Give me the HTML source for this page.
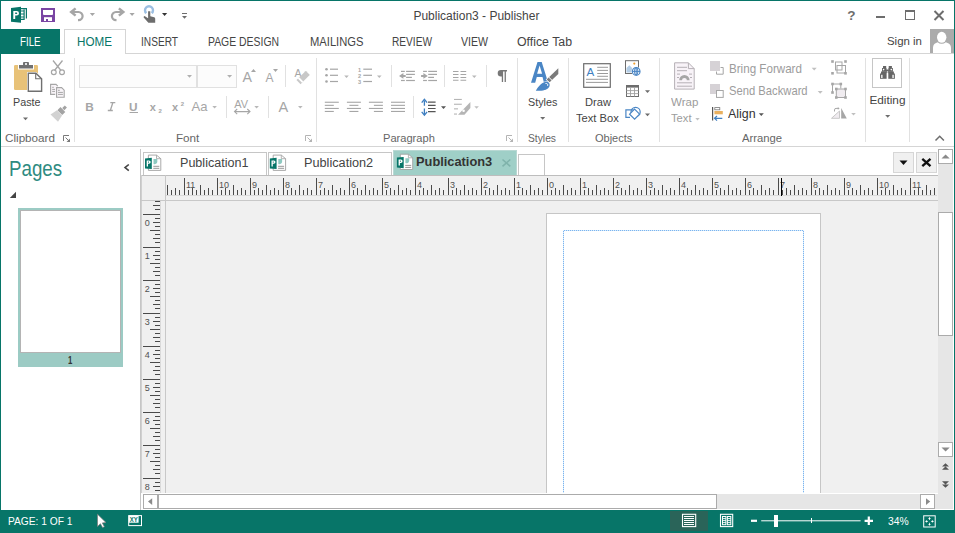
<!DOCTYPE html>
<html><head><meta charset="utf-8"><style>
html,body{margin:0;padding:0;}
body{width:955px;height:533px;position:relative;overflow:hidden;background:#fff;font-family:"Liberation Sans",sans-serif;}
.t{position:absolute;white-space:nowrap;line-height:1;transform-origin:0 0;}
svg{overflow:visible;}
</style></head><body>
<div class="t" style="left:413.40px;top:9.64px;font-size:12.00px;color:#444;">Publication3 - Publisher</div><div style="position:absolute;left:0px;top:29px;width:60px;height:25px;background:#077568;"></div><div class="t" style="left:20.40px;top:35.64px;font-size:12.00px;color:#fff;transform:scaleX(0.8136);">FILE</div><div style="position:absolute;left:64px;top:29px;width:62px;height:25px;border:1px solid #d5d5d5;border-bottom:none;box-sizing:border-box;background:#fff;"></div><div style="position:absolute;left:126px;top:53px;width:828px;height:1px;background:#d5d5d5;"></div><div style="position:absolute;left:60px;top:53px;width:5px;height:1px;background:#d5d5d5;"></div><div class="t" style="left:77.00px;top:35.74px;font-size:12.00px;color:#077568;transform:scaleX(0.9722);">HOME</div><div class="t" style="left:141.00px;top:35.74px;font-size:12.00px;color:#444;transform:scaleX(0.8447);">INSERT</div><div class="t" style="left:208.00px;top:35.74px;font-size:12.00px;color:#444;transform:scaleX(0.8682);">PAGE DESIGN</div><div class="t" style="left:309.50px;top:35.74px;font-size:12.00px;color:#444;transform:scaleX(0.9327);">MAILINGS</div><div class="t" style="left:392.00px;top:35.74px;font-size:12.00px;color:#444;transform:scaleX(0.8450);">REVIEW</div><div class="t" style="left:461.00px;top:35.74px;font-size:12.00px;color:#444;transform:scaleX(0.8806);">VIEW</div><div class="t" style="left:517.00px;top:35.74px;font-size:12.00px;color:#444;transform:scaleX(1.0265);">Office Tab</div><div class="t" style="left:887.00px;top:34.88px;font-size:11.60px;color:#444;transform:scaleX(0.9860);">Sign in</div><div style="position:absolute;left:930px;top:29px;width:24px;height:24px;background:#ababab;"></div><div style="position:absolute;left:1px;top:146px;width:953px;height:1px;background:#d5d5d5;"></div><div style="position:absolute;left:74px;top:58px;width:1px;height:84px;background:#e1e1e1;"></div><div style="position:absolute;left:316px;top:58px;width:1px;height:84px;background:#e1e1e1;"></div><div style="position:absolute;left:517px;top:58px;width:1px;height:84px;background:#e1e1e1;"></div><div style="position:absolute;left:568px;top:58px;width:1px;height:84px;background:#e1e1e1;"></div><div style="position:absolute;left:659px;top:58px;width:1px;height:84px;background:#e1e1e1;"></div><div style="position:absolute;left:865px;top:58px;width:1px;height:84px;background:#e1e1e1;"></div><div style="position:absolute;left:909px;top:58px;width:1px;height:84px;background:#e1e1e1;"></div><div class="t" style="left:4.60px;top:132.89px;font-size:11.00px;color:#666;transform:scaleX(1.0620);">Clipboard</div><div class="t" style="left:175.50px;top:133.19px;font-size:11.00px;color:#666;transform:scaleX(1.0591);">Font</div><div class="t" style="left:382.60px;top:133.09px;font-size:11.00px;color:#666;transform:scaleX(1.0084);">Paragraph</div><div class="t" style="left:528.40px;top:132.89px;font-size:11.00px;color:#666;transform:scaleX(0.9341);">Styles</div><div class="t" style="left:595.00px;top:132.89px;font-size:11.00px;color:#666;">Objects</div><div class="t" style="left:742.30px;top:132.89px;font-size:11.00px;color:#666;transform:scaleX(1.0240);">Arrange</div><div class="t" style="left:12.50px;top:97.31px;font-size:11.80px;color:#444;transform:scaleX(0.9121);">Paste</div><div class="t" style="left:528.40px;top:97.21px;font-size:11.80px;color:#444;transform:scaleX(0.9143);">Styles</div><div class="t" style="left:584.60px;top:97.21px;font-size:11.80px;color:#444;transform:scaleX(0.9436);">Draw</div><div class="t" style="left:576.20px;top:113.21px;font-size:11.80px;color:#444;transform:scaleX(0.9458);">Text Box</div><div class="t" style="left:671.40px;top:97.21px;font-size:11.80px;color:#9c9c9c;transform:scaleX(0.9762);">Wrap</div><div class="t" style="left:671.00px;top:113.21px;font-size:11.80px;color:#9c9c9c;transform:scaleX(0.9468);">Text</div><div class="t" style="left:869.40px;top:94.91px;font-size:11.80px;color:#444;">Editing</div><div class="t" style="left:728.60px;top:62.67px;font-size:12.20px;color:#9c9c9c;transform:scaleX(0.9528);">Bring Forward</div><div class="t" style="left:728.60px;top:85.47px;font-size:12.20px;color:#9c9c9c;transform:scaleX(0.9209);">Send Backward</div><div class="t" style="left:728.00px;top:108.24px;font-size:12.00px;color:#333;transform:scaleX(1.0337);">Align</div><div style="position:absolute;left:79px;top:65px;width:118px;height:23px;border:1px solid #e1e1e1;box-sizing:border-box;background:#fcfcfc;"></div><div style="position:absolute;left:197px;top:65px;width:40px;height:23px;border:1px solid #e1e1e1;box-sizing:border-box;background:#fcfcfc;"></div><div style="position:absolute;left:140px;top:149px;width:1px;height:361px;background:#c6c6c6;"></div><div class="t" style="left:9.30px;top:158.34px;font-size:21.80px;color:#2f8b81;transform:scaleX(0.8592);">Pages</div><div style="position:absolute;left:18px;top:208px;width:105px;height:159px;background:#9ccbc4;"></div><div style="position:absolute;left:20px;top:210px;width:101px;height:143px;background:#fff;border:1px solid #b4b4b4;box-sizing:border-box;"></div><div class="t" style="left:67.70px;top:353.98px;font-size:11.60px;color:#333;font-weight:bold;transform:scaleX(0.6679);">1</div><div style="position:absolute;left:143px;top:152px;width:124px;height:24px;border:1px solid #c6c6c6;border-bottom:none;box-sizing:border-box;background:#fff;"></div><div style="position:absolute;left:268px;top:152px;width:124px;height:24px;border:1px solid #c6c6c6;border-bottom:none;box-sizing:border-box;background:#fff;"></div><div style="position:absolute;left:393px;top:150px;width:124px;height:26px;border:1px solid #b8d8d3;border-bottom:none;box-sizing:border-box;background:#9fcfc7;"></div><div style="position:absolute;left:518px;top:154px;width:27px;height:22px;border:1px solid #c6c6c6;border-bottom:none;box-sizing:border-box;background:#fff;"></div><div class="t" style="left:179.60px;top:157.22px;font-size:12.50px;color:#444;transform:scaleX(1.0055);">Publication1</div><div class="t" style="left:304.40px;top:157.02px;font-size:12.50px;color:#444;transform:scaleX(1.0158);">Publication2</div><div class="t" style="left:416.30px;top:156.42px;font-size:12.50px;color:#333;font-weight:bold;transform:scaleX(1.0254);">Publication3</div><div style="position:absolute;left:893px;top:152px;width:21px;height:21px;border:1px solid #d6d6d6;box-sizing:border-box;background:#f0f0f0;"></div><div style="position:absolute;left:916px;top:152px;width:21px;height:21px;border:1px solid #d6d6d6;box-sizing:border-box;background:#f0f0f0;"></div><div style="position:absolute;left:141px;top:175px;width:797px;height:319px;background:#f0f0f0;"></div><div style="position:absolute;left:141px;top:175px;width:797px;height:1px;background:#bdbdbd;"></div><div style="position:absolute;left:141px;top:175px;width:1px;height:319px;background:#d0d0d0;"></div><div style="position:absolute;left:165px;top:175px;width:1px;height:319px;background:#c8c8c8;"></div><div style="position:absolute;left:141px;top:200px;width:797px;height:1px;background:#c8c8c8;"></div><div style="position:absolute;left:166px;top:195px;width:771px;height:1px;background:#dadada;"></div><div style="position:absolute;left:160px;top:201px;width:1px;height:292px;background:#dadada;"></div><div style="position:absolute;left:546px;top:213px;width:275px;height:290px;background:#fff;border:1px solid #c6c6c6;box-sizing:border-box;"></div><svg style="position:absolute;left:0;top:0" width="955" height="533"><path d="M563.5,494 V230.5 H803.5 V494" fill="none" stroke="#d2eefa" stroke-width="1"/><path d="M563.5,494 V230.5 H803.5 V494" fill="none" stroke="#7fb0f0" stroke-width="1" stroke-dasharray="1 1"/></svg><div style="position:absolute;left:141px;top:493px;width:797px;height:17px;background:#fff;"></div><div style="position:absolute;left:143px;top:494px;width:795px;height:15px;background:#e6e6e6;"></div><div style="position:absolute;left:143px;top:494px;width:15px;height:15px;background:#fff;border:1px solid #ababab;box-sizing:border-box;"></div><div style="position:absolute;left:158px;top:494px;width:559px;height:15px;background:#fff;border:1px solid #ababab;box-sizing:border-box;"></div><div style="position:absolute;left:920px;top:494px;width:15px;height:15px;background:#fff;border:1px solid #ababab;box-sizing:border-box;"></div><div style="position:absolute;left:938px;top:149px;width:15px;height:360px;background:#e6e6e6;"></div><div style="position:absolute;left:938px;top:149px;width:15px;height:15px;background:#fff;border:1px solid #ababab;box-sizing:border-box;"></div><div style="position:absolute;left:938px;top:212px;width:15px;height:124px;background:#fff;border:1px solid #ababab;box-sizing:border-box;"></div><div style="position:absolute;left:938px;top:442px;width:15px;height:15px;background:#fff;border:1px solid #ababab;box-sizing:border-box;"></div><div style="position:absolute;left:0px;top:510px;width:955px;height:23px;background:#077568;"></div><div class="t" style="left:8.40px;top:515.79px;font-size:11.00px;color:#fff;transform:scaleX(0.9285);">PAGE: 1 OF 1</div><div style="position:absolute;left:670px;top:511px;width:38px;height:20px;background:#2a6459;"></div><div class="t" style="left:887.80px;top:515.79px;font-size:11.00px;color:#fff;transform:scaleX(0.9409);">34%</div><div style="position:absolute;left:0px;top:0px;width:955px;height:1px;background:#077568;"></div><div style="position:absolute;left:0px;top:0px;width:1px;height:533px;background:#077568;"></div><div style="position:absolute;left:954px;top:0px;width:1px;height:533px;background:#077568;"></div><svg style="position:absolute;left:0;top:0" width="955" height="533" viewBox="0 0 955 533" font-family="Liberation Sans"><rect x="167" y="185" width="1" height="10" fill="#4a4a4a"/><rect x="171" y="190" width="1" height="5" fill="#4a4a4a"/><rect x="175" y="188" width="1" height="7" fill="#4a4a4a"/><rect x="179" y="190" width="1" height="5" fill="#4a4a4a"/><rect x="184" y="178" width="1" height="17" fill="#4a4a4a"/><rect x="188" y="190" width="1" height="5" fill="#4a4a4a"/><rect x="192" y="188" width="1" height="7" fill="#4a4a4a"/><rect x="196" y="190" width="1" height="5" fill="#4a4a4a"/><rect x="200" y="185" width="1" height="10" fill="#4a4a4a"/><rect x="204" y="190" width="1" height="5" fill="#4a4a4a"/><rect x="208" y="188" width="1" height="7" fill="#4a4a4a"/><rect x="212" y="190" width="1" height="5" fill="#4a4a4a"/><rect x="217" y="178" width="1" height="17" fill="#4a4a4a"/><rect x="221" y="190" width="1" height="5" fill="#4a4a4a"/><rect x="225" y="188" width="1" height="7" fill="#4a4a4a"/><rect x="229" y="190" width="1" height="5" fill="#4a4a4a"/><rect x="233" y="185" width="1" height="10" fill="#4a4a4a"/><rect x="237" y="190" width="1" height="5" fill="#4a4a4a"/><rect x="241" y="188" width="1" height="7" fill="#4a4a4a"/><rect x="245" y="190" width="1" height="5" fill="#4a4a4a"/><rect x="250" y="178" width="1" height="17" fill="#4a4a4a"/><rect x="254" y="190" width="1" height="5" fill="#4a4a4a"/><rect x="258" y="188" width="1" height="7" fill="#4a4a4a"/><rect x="262" y="190" width="1" height="5" fill="#4a4a4a"/><rect x="266" y="185" width="1" height="10" fill="#4a4a4a"/><rect x="270" y="190" width="1" height="5" fill="#4a4a4a"/><rect x="274" y="188" width="1" height="7" fill="#4a4a4a"/><rect x="278" y="190" width="1" height="5" fill="#4a4a4a"/><rect x="283" y="178" width="1" height="17" fill="#4a4a4a"/><rect x="287" y="190" width="1" height="5" fill="#4a4a4a"/><rect x="291" y="188" width="1" height="7" fill="#4a4a4a"/><rect x="295" y="190" width="1" height="5" fill="#4a4a4a"/><rect x="299" y="185" width="1" height="10" fill="#4a4a4a"/><rect x="303" y="190" width="1" height="5" fill="#4a4a4a"/><rect x="307" y="188" width="1" height="7" fill="#4a4a4a"/><rect x="311" y="190" width="1" height="5" fill="#4a4a4a"/><rect x="316" y="178" width="1" height="17" fill="#4a4a4a"/><rect x="320" y="190" width="1" height="5" fill="#4a4a4a"/><rect x="324" y="188" width="1" height="7" fill="#4a4a4a"/><rect x="328" y="190" width="1" height="5" fill="#4a4a4a"/><rect x="332" y="185" width="1" height="10" fill="#4a4a4a"/><rect x="336" y="190" width="1" height="5" fill="#4a4a4a"/><rect x="340" y="188" width="1" height="7" fill="#4a4a4a"/><rect x="344" y="190" width="1" height="5" fill="#4a4a4a"/><rect x="349" y="178" width="1" height="17" fill="#4a4a4a"/><rect x="353" y="190" width="1" height="5" fill="#4a4a4a"/><rect x="357" y="188" width="1" height="7" fill="#4a4a4a"/><rect x="361" y="190" width="1" height="5" fill="#4a4a4a"/><rect x="365" y="185" width="1" height="10" fill="#4a4a4a"/><rect x="369" y="190" width="1" height="5" fill="#4a4a4a"/><rect x="373" y="188" width="1" height="7" fill="#4a4a4a"/><rect x="377" y="190" width="1" height="5" fill="#4a4a4a"/><rect x="382" y="178" width="1" height="17" fill="#4a4a4a"/><rect x="386" y="190" width="1" height="5" fill="#4a4a4a"/><rect x="390" y="188" width="1" height="7" fill="#4a4a4a"/><rect x="394" y="190" width="1" height="5" fill="#4a4a4a"/><rect x="398" y="185" width="1" height="10" fill="#4a4a4a"/><rect x="402" y="190" width="1" height="5" fill="#4a4a4a"/><rect x="406" y="188" width="1" height="7" fill="#4a4a4a"/><rect x="410" y="190" width="1" height="5" fill="#4a4a4a"/><rect x="415" y="178" width="1" height="17" fill="#4a4a4a"/><rect x="419" y="190" width="1" height="5" fill="#4a4a4a"/><rect x="423" y="188" width="1" height="7" fill="#4a4a4a"/><rect x="427" y="190" width="1" height="5" fill="#4a4a4a"/><rect x="431" y="185" width="1" height="10" fill="#4a4a4a"/><rect x="435" y="190" width="1" height="5" fill="#4a4a4a"/><rect x="439" y="188" width="1" height="7" fill="#4a4a4a"/><rect x="443" y="190" width="1" height="5" fill="#4a4a4a"/><rect x="448" y="178" width="1" height="17" fill="#4a4a4a"/><rect x="452" y="190" width="1" height="5" fill="#4a4a4a"/><rect x="456" y="188" width="1" height="7" fill="#4a4a4a"/><rect x="460" y="190" width="1" height="5" fill="#4a4a4a"/><rect x="464" y="185" width="1" height="10" fill="#4a4a4a"/><rect x="468" y="190" width="1" height="5" fill="#4a4a4a"/><rect x="472" y="188" width="1" height="7" fill="#4a4a4a"/><rect x="476" y="190" width="1" height="5" fill="#4a4a4a"/><rect x="481" y="178" width="1" height="17" fill="#4a4a4a"/><rect x="485" y="190" width="1" height="5" fill="#4a4a4a"/><rect x="489" y="188" width="1" height="7" fill="#4a4a4a"/><rect x="493" y="190" width="1" height="5" fill="#4a4a4a"/><rect x="497" y="185" width="1" height="10" fill="#4a4a4a"/><rect x="501" y="190" width="1" height="5" fill="#4a4a4a"/><rect x="505" y="188" width="1" height="7" fill="#4a4a4a"/><rect x="509" y="190" width="1" height="5" fill="#4a4a4a"/><rect x="514" y="178" width="1" height="17" fill="#4a4a4a"/><rect x="518" y="190" width="1" height="5" fill="#4a4a4a"/><rect x="522" y="188" width="1" height="7" fill="#4a4a4a"/><rect x="526" y="190" width="1" height="5" fill="#4a4a4a"/><rect x="530" y="185" width="1" height="10" fill="#4a4a4a"/><rect x="534" y="190" width="1" height="5" fill="#4a4a4a"/><rect x="538" y="188" width="1" height="7" fill="#4a4a4a"/><rect x="542" y="190" width="1" height="5" fill="#4a4a4a"/><rect x="547" y="178" width="1" height="17" fill="#4a4a4a"/><rect x="551" y="190" width="1" height="5" fill="#4a4a4a"/><rect x="555" y="188" width="1" height="7" fill="#4a4a4a"/><rect x="559" y="190" width="1" height="5" fill="#4a4a4a"/><rect x="563" y="185" width="1" height="10" fill="#4a4a4a"/><rect x="567" y="190" width="1" height="5" fill="#4a4a4a"/><rect x="571" y="188" width="1" height="7" fill="#4a4a4a"/><rect x="575" y="190" width="1" height="5" fill="#4a4a4a"/><rect x="580" y="178" width="1" height="17" fill="#4a4a4a"/><rect x="584" y="190" width="1" height="5" fill="#4a4a4a"/><rect x="588" y="188" width="1" height="7" fill="#4a4a4a"/><rect x="592" y="190" width="1" height="5" fill="#4a4a4a"/><rect x="596" y="185" width="1" height="10" fill="#4a4a4a"/><rect x="600" y="190" width="1" height="5" fill="#4a4a4a"/><rect x="604" y="188" width="1" height="7" fill="#4a4a4a"/><rect x="608" y="190" width="1" height="5" fill="#4a4a4a"/><rect x="613" y="178" width="1" height="17" fill="#4a4a4a"/><rect x="617" y="190" width="1" height="5" fill="#4a4a4a"/><rect x="621" y="188" width="1" height="7" fill="#4a4a4a"/><rect x="625" y="190" width="1" height="5" fill="#4a4a4a"/><rect x="629" y="185" width="1" height="10" fill="#4a4a4a"/><rect x="633" y="190" width="1" height="5" fill="#4a4a4a"/><rect x="637" y="188" width="1" height="7" fill="#4a4a4a"/><rect x="641" y="190" width="1" height="5" fill="#4a4a4a"/><rect x="646" y="178" width="1" height="17" fill="#4a4a4a"/><rect x="650" y="190" width="1" height="5" fill="#4a4a4a"/><rect x="654" y="188" width="1" height="7" fill="#4a4a4a"/><rect x="658" y="190" width="1" height="5" fill="#4a4a4a"/><rect x="662" y="185" width="1" height="10" fill="#4a4a4a"/><rect x="666" y="190" width="1" height="5" fill="#4a4a4a"/><rect x="670" y="188" width="1" height="7" fill="#4a4a4a"/><rect x="674" y="190" width="1" height="5" fill="#4a4a4a"/><rect x="679" y="178" width="1" height="17" fill="#4a4a4a"/><rect x="683" y="190" width="1" height="5" fill="#4a4a4a"/><rect x="687" y="188" width="1" height="7" fill="#4a4a4a"/><rect x="691" y="190" width="1" height="5" fill="#4a4a4a"/><rect x="695" y="185" width="1" height="10" fill="#4a4a4a"/><rect x="699" y="190" width="1" height="5" fill="#4a4a4a"/><rect x="703" y="188" width="1" height="7" fill="#4a4a4a"/><rect x="707" y="190" width="1" height="5" fill="#4a4a4a"/><rect x="712" y="178" width="1" height="17" fill="#4a4a4a"/><rect x="716" y="190" width="1" height="5" fill="#4a4a4a"/><rect x="720" y="188" width="1" height="7" fill="#4a4a4a"/><rect x="724" y="190" width="1" height="5" fill="#4a4a4a"/><rect x="728" y="185" width="1" height="10" fill="#4a4a4a"/><rect x="732" y="190" width="1" height="5" fill="#4a4a4a"/><rect x="736" y="188" width="1" height="7" fill="#4a4a4a"/><rect x="740" y="190" width="1" height="5" fill="#4a4a4a"/><rect x="745" y="178" width="1" height="17" fill="#4a4a4a"/><rect x="749" y="190" width="1" height="5" fill="#4a4a4a"/><rect x="753" y="188" width="1" height="7" fill="#4a4a4a"/><rect x="757" y="190" width="1" height="5" fill="#4a4a4a"/><rect x="761" y="185" width="1" height="10" fill="#4a4a4a"/><rect x="765" y="190" width="1" height="5" fill="#4a4a4a"/><rect x="769" y="188" width="1" height="7" fill="#4a4a4a"/><rect x="773" y="190" width="1" height="5" fill="#4a4a4a"/><rect x="778" y="178" width="1" height="17" fill="#4a4a4a"/><rect x="782" y="190" width="1" height="5" fill="#4a4a4a"/><rect x="786" y="188" width="1" height="7" fill="#4a4a4a"/><rect x="790" y="190" width="1" height="5" fill="#4a4a4a"/><rect x="794" y="185" width="1" height="10" fill="#4a4a4a"/><rect x="798" y="190" width="1" height="5" fill="#4a4a4a"/><rect x="802" y="188" width="1" height="7" fill="#4a4a4a"/><rect x="806" y="190" width="1" height="5" fill="#4a4a4a"/><rect x="811" y="178" width="1" height="17" fill="#4a4a4a"/><rect x="815" y="190" width="1" height="5" fill="#4a4a4a"/><rect x="819" y="188" width="1" height="7" fill="#4a4a4a"/><rect x="823" y="190" width="1" height="5" fill="#4a4a4a"/><rect x="827" y="185" width="1" height="10" fill="#4a4a4a"/><rect x="831" y="190" width="1" height="5" fill="#4a4a4a"/><rect x="835" y="188" width="1" height="7" fill="#4a4a4a"/><rect x="839" y="190" width="1" height="5" fill="#4a4a4a"/><rect x="844" y="178" width="1" height="17" fill="#4a4a4a"/><rect x="848" y="190" width="1" height="5" fill="#4a4a4a"/><rect x="852" y="188" width="1" height="7" fill="#4a4a4a"/><rect x="856" y="190" width="1" height="5" fill="#4a4a4a"/><rect x="860" y="185" width="1" height="10" fill="#4a4a4a"/><rect x="864" y="190" width="1" height="5" fill="#4a4a4a"/><rect x="868" y="188" width="1" height="7" fill="#4a4a4a"/><rect x="872" y="190" width="1" height="5" fill="#4a4a4a"/><rect x="877" y="178" width="1" height="17" fill="#4a4a4a"/><rect x="881" y="190" width="1" height="5" fill="#4a4a4a"/><rect x="885" y="188" width="1" height="7" fill="#4a4a4a"/><rect x="889" y="190" width="1" height="5" fill="#4a4a4a"/><rect x="893" y="185" width="1" height="10" fill="#4a4a4a"/><rect x="897" y="190" width="1" height="5" fill="#4a4a4a"/><rect x="901" y="188" width="1" height="7" fill="#4a4a4a"/><rect x="905" y="190" width="1" height="5" fill="#4a4a4a"/><rect x="910" y="178" width="1" height="17" fill="#4a4a4a"/><rect x="914" y="190" width="1" height="5" fill="#4a4a4a"/><rect x="918" y="188" width="1" height="7" fill="#4a4a4a"/><rect x="922" y="190" width="1" height="5" fill="#4a4a4a"/><rect x="926" y="185" width="1" height="10" fill="#4a4a4a"/><rect x="930" y="190" width="1" height="5" fill="#4a4a4a"/><rect x="934" y="188" width="1" height="7" fill="#4a4a4a"/><rect x="155" y="201" width="5" height="1" fill="#4a4a4a"/><rect x="153" y="205" width="7" height="1" fill="#4a4a4a"/><rect x="155" y="209" width="5" height="1" fill="#4a4a4a"/><rect x="143" y="214" width="17" height="1" fill="#4a4a4a"/><rect x="155" y="218" width="5" height="1" fill="#4a4a4a"/><rect x="153" y="222" width="7" height="1" fill="#4a4a4a"/><rect x="155" y="226" width="5" height="1" fill="#4a4a4a"/><rect x="150" y="230" width="10" height="1" fill="#4a4a4a"/><rect x="155" y="234" width="5" height="1" fill="#4a4a4a"/><rect x="153" y="238" width="7" height="1" fill="#4a4a4a"/><rect x="155" y="242" width="5" height="1" fill="#4a4a4a"/><rect x="143" y="247" width="17" height="1" fill="#4a4a4a"/><rect x="155" y="251" width="5" height="1" fill="#4a4a4a"/><rect x="153" y="255" width="7" height="1" fill="#4a4a4a"/><rect x="155" y="259" width="5" height="1" fill="#4a4a4a"/><rect x="150" y="263" width="10" height="1" fill="#4a4a4a"/><rect x="155" y="267" width="5" height="1" fill="#4a4a4a"/><rect x="153" y="271" width="7" height="1" fill="#4a4a4a"/><rect x="155" y="275" width="5" height="1" fill="#4a4a4a"/><rect x="143" y="280" width="17" height="1" fill="#4a4a4a"/><rect x="155" y="284" width="5" height="1" fill="#4a4a4a"/><rect x="153" y="288" width="7" height="1" fill="#4a4a4a"/><rect x="155" y="292" width="5" height="1" fill="#4a4a4a"/><rect x="150" y="296" width="10" height="1" fill="#4a4a4a"/><rect x="155" y="300" width="5" height="1" fill="#4a4a4a"/><rect x="153" y="304" width="7" height="1" fill="#4a4a4a"/><rect x="155" y="308" width="5" height="1" fill="#4a4a4a"/><rect x="143" y="313" width="17" height="1" fill="#4a4a4a"/><rect x="155" y="317" width="5" height="1" fill="#4a4a4a"/><rect x="153" y="321" width="7" height="1" fill="#4a4a4a"/><rect x="155" y="325" width="5" height="1" fill="#4a4a4a"/><rect x="150" y="329" width="10" height="1" fill="#4a4a4a"/><rect x="155" y="333" width="5" height="1" fill="#4a4a4a"/><rect x="153" y="337" width="7" height="1" fill="#4a4a4a"/><rect x="155" y="341" width="5" height="1" fill="#4a4a4a"/><rect x="143" y="346" width="17" height="1" fill="#4a4a4a"/><rect x="155" y="350" width="5" height="1" fill="#4a4a4a"/><rect x="153" y="354" width="7" height="1" fill="#4a4a4a"/><rect x="155" y="358" width="5" height="1" fill="#4a4a4a"/><rect x="150" y="362" width="10" height="1" fill="#4a4a4a"/><rect x="155" y="366" width="5" height="1" fill="#4a4a4a"/><rect x="153" y="370" width="7" height="1" fill="#4a4a4a"/><rect x="155" y="374" width="5" height="1" fill="#4a4a4a"/><rect x="143" y="379" width="17" height="1" fill="#4a4a4a"/><rect x="155" y="383" width="5" height="1" fill="#4a4a4a"/><rect x="153" y="387" width="7" height="1" fill="#4a4a4a"/><rect x="155" y="391" width="5" height="1" fill="#4a4a4a"/><rect x="150" y="395" width="10" height="1" fill="#4a4a4a"/><rect x="155" y="399" width="5" height="1" fill="#4a4a4a"/><rect x="153" y="403" width="7" height="1" fill="#4a4a4a"/><rect x="155" y="407" width="5" height="1" fill="#4a4a4a"/><rect x="143" y="412" width="17" height="1" fill="#4a4a4a"/><rect x="155" y="416" width="5" height="1" fill="#4a4a4a"/><rect x="153" y="420" width="7" height="1" fill="#4a4a4a"/><rect x="155" y="424" width="5" height="1" fill="#4a4a4a"/><rect x="150" y="428" width="10" height="1" fill="#4a4a4a"/><rect x="155" y="432" width="5" height="1" fill="#4a4a4a"/><rect x="153" y="436" width="7" height="1" fill="#4a4a4a"/><rect x="155" y="440" width="5" height="1" fill="#4a4a4a"/><rect x="143" y="445" width="17" height="1" fill="#4a4a4a"/><rect x="155" y="449" width="5" height="1" fill="#4a4a4a"/><rect x="153" y="453" width="7" height="1" fill="#4a4a4a"/><rect x="155" y="457" width="5" height="1" fill="#4a4a4a"/><rect x="150" y="461" width="10" height="1" fill="#4a4a4a"/><rect x="155" y="465" width="5" height="1" fill="#4a4a4a"/><rect x="153" y="469" width="7" height="1" fill="#4a4a4a"/><rect x="155" y="473" width="5" height="1" fill="#4a4a4a"/><rect x="143" y="478" width="17" height="1" fill="#4a4a4a"/><rect x="155" y="482" width="5" height="1" fill="#4a4a4a"/><rect x="153" y="486" width="7" height="1" fill="#4a4a4a"/><rect x="155" y="490" width="5" height="1" fill="#4a4a4a"/><text x="186" y="187.8" font-size="9" fill="#505050">11</text><text x="219" y="187.8" font-size="9" fill="#505050">10</text><text x="252" y="187.8" font-size="9" fill="#505050">9</text><text x="285" y="187.8" font-size="9" fill="#505050">8</text><text x="318" y="187.8" font-size="9" fill="#505050">7</text><text x="351" y="187.8" font-size="9" fill="#505050">6</text><text x="384" y="187.8" font-size="9" fill="#505050">5</text><text x="417" y="187.8" font-size="9" fill="#505050">4</text><text x="450" y="187.8" font-size="9" fill="#505050">3</text><text x="483" y="187.8" font-size="9" fill="#505050">2</text><text x="516" y="187.8" font-size="9" fill="#505050">1</text><text x="549" y="187.8" font-size="9" fill="#505050">0</text><text x="582" y="187.8" font-size="9" fill="#505050">1</text><text x="615" y="187.8" font-size="9" fill="#505050">2</text><text x="648" y="187.8" font-size="9" fill="#505050">3</text><text x="681" y="187.8" font-size="9" fill="#505050">4</text><text x="714" y="187.8" font-size="9" fill="#505050">5</text><text x="747" y="187.8" font-size="9" fill="#505050">6</text><text x="780" y="187.8" font-size="9" fill="#505050">7</text><text x="813" y="187.8" font-size="9" fill="#505050">8</text><text x="846" y="187.8" font-size="9" fill="#505050">9</text><text x="879" y="187.8" font-size="9" fill="#505050">10</text><text x="912" y="187.8" font-size="9" fill="#505050">11</text><text x="144.8" y="226.2" font-size="9" fill="#505050">0</text><text x="144.8" y="259.2" font-size="9" fill="#505050">1</text><text x="144.8" y="292.2" font-size="9" fill="#505050">2</text><text x="144.8" y="325.2" font-size="9" fill="#505050">3</text><text x="144.8" y="358.2" font-size="9" fill="#505050">4</text><text x="144.8" y="391.2" font-size="9" fill="#505050">5</text><text x="144.8" y="424.2" font-size="9" fill="#505050">6</text><text x="144.8" y="457.2" font-size="9" fill="#505050">7</text><text x="144.8" y="490.2" font-size="9" fill="#505050">8</text><rect x="781" y="178" width="1" height="18" fill="#000"/></svg><svg style="position:absolute;left:0;top:0" width="955" height="60" viewBox="0 0 955 60"><path d="M11,8 L21,6.8 L21,22.8 L11,21.8 Z" fill="#077568"/><path d="M13.3,11 h3.4 a2.3,2.3 0 0 1 0,4.6 h-1.5 v3.3 h-1.9 Z M15.2,12.6 v1.5 h1.3 a0.75,0.75 0 0 0 0,-1.5 Z" fill="#fff"/><path d="M21,8 h6 v10.6 h-1.2 v-9.4 h-4.8 Z M23.5,9.5 h1.2 v10.5 h-3.7 v-1.2 h2.5 v-1.2 h-2.5 v-1.2 h2.5 v-1.8 h-2.5 v-1.2 h2.5 v-1.8 h-2.5 v-1.2 h2.5 Z" fill="#077568"/><rect x="41" y="8" width="14" height="14" fill="#7a45a3"/><path d="M43,10 h10 v4 a1,1 0 0 1 -1,1 h-8 a1,1 0 0 1 -1,-1 Z" fill="#fff"/><rect x="44" y="17.2" width="8" height="3.8" fill="#fff"/><rect x="46" y="19" width="2" height="2" fill="#7a45a3"/><path d="M75.6,8.4 L71.2,12 L75.6,15.6" fill="none" stroke="#a6a6a6" stroke-width="2.5" stroke-linejoin="miter"/><path d="M72,12 H78.5 A4.1,4.1 0 0 1 78.5,20.2 H78" fill="none" stroke="#a6a6a6" stroke-width="2.2"/><path d="M89.8,13 h5.2 l-2.6,3 z" fill="#a6a6a6"/><path d="M118.9,8.4 L123.3,12 L118.9,15.6" fill="none" stroke="#a6a6a6" stroke-width="2.5" stroke-linejoin="miter"/><path d="M122.5,12 H116 A4.1,4.1 0 0 0 116,20.2 H116.5" fill="none" stroke="#a6a6a6" stroke-width="2.2"/><path d="M129.5,13 h5.2 l-2.6,3 z" fill="#a6a6a6"/><path d="M146.3,13.2 A4,4 0 1 1 151.7,13.2" fill="none" stroke="#9cbfe2" stroke-width="2.4"/><path d="M148.1,11.2 h2.2 v5 l3.9,1.1 a1.5,1.5 0 0 1 1,1.4 v4 h-6.8 l-4.7,-5.3 a0.9,0.9 0 0 1 1.2,-1.2 l3.2,2.1 Z" fill="#6d6d6d"/><path d="M162,13 h5.2 l-2.6,2.9 z" fill="#333"/><rect x="182" y="13" width="5" height="1" fill="#6d6d6d"/><path d="M182,16 h5 l-2.5,2.8 z" fill="#6d6d6d"/><text x="847.3" y="20.2" font-size="13.5" font-weight="bold" fill="#6d6d6d" font-family="Liberation Sans">?</text><rect x="876" y="16" width="9" height="2" fill="#6d6d6d"/><rect x="905.5" y="10.5" width="9" height="9" fill="none" stroke="#6d6d6d" stroke-width="1"/><rect x="905" y="10" width="10" height="2" fill="#6d6d6d"/><path d="M934.5,11 L943.5,20 M943.5,11 L934.5,20" stroke="#6d6d6d" stroke-width="2"/><path d="M933,53 V48 C933,44.5 935.5,42.3 939,42.3 H944.5 C948,42.3 951,44.5 951,48 V53 Z" fill="#fff"/><ellipse cx="941.7" cy="37.3" rx="5.9" ry="6.5" fill="#ababab"/><ellipse cx="941.7" cy="37.3" rx="4.7" ry="5.5" fill="#fff"/></svg><svg style="position:absolute;left:0;top:0" width="955" height="150" viewBox="0 0 955 150"><rect x="14" y="65" width="24" height="25" rx="1.2" fill="#e8c278"/><rect x="18" y="64.5" width="16" height="5" fill="#fff"/><path d="M19,65 h14 v3.5 h-14 Z" fill="#707070"/><rect x="23" y="62" width="6" height="3.5" rx="1" fill="#707070"/><rect x="25" y="63.2" width="2" height="1.6" fill="#fff"/><path d="M27,72 h9.2 l6.8,6.2 v14.8 h-16 Z" fill="#fff"/><path d="M28.3,73.3 h7.6 l5.7,5.4 v12.6 h-13.3 Z" fill="#fff" stroke="#707070" stroke-width="1.4"/><path d="M35.7,73.3 v5.4 h5.8" fill="none" stroke="#707070" stroke-width="1.1"/><path d="M53,60.5 L61,70.5 M62.5,60.5 L54.5,70.5" stroke="#a6a6a6" stroke-width="1.3"/><circle cx="53.8" cy="72.3" r="2.4" fill="none" stroke="#a6a6a6" stroke-width="1.2"/><circle cx="62" cy="72.3" r="2.4" fill="none" stroke="#a6a6a6" stroke-width="1.2"/><path d="M55.2,94.4 H50.6 V84.4 H56 L57.8,86.2" fill="#f8f4f8" stroke="#a6a6a6" stroke-width="1.1"/><path d="M52.2,87.3 h1.6 M52.2,89.4 h2.8 M52.2,91.4 h2.8" stroke="#a6a6a6" stroke-width="1"/><path d="M56.6,87.6 h5 l2.6,2.6 v7 h-7.6 Z" fill="#f8f4f8" stroke="#a6a6a6" stroke-width="1.1"/><path d="M58,90.3 h1.8 M58,92.4 h4.9 M58,94.4 h4.9" stroke="#a6a6a6" stroke-width="1"/><g transform="translate(58.8,113.6) rotate(45)"><rect x="-1.5" y="-10" width="3" height="3.6" fill="#a3a3a3"/><rect x="-3.4" y="-5.8" width="6.8" height="4.4" fill="#a3a3a3"/><path d="M-3.6,-1 H3.6 L5.3,6.4 H-5.3 Z" fill="#d2d2d2"/></g><path d="M63.5,141 V135.5 H69" fill="none" stroke="#7a7a7a" stroke-width="1"/><path d="M65.5,137.5 L69,141" stroke="#7a7a7a" stroke-width="1"/><path d="M66.5,142 H70 V138.5 Z" fill="#7a7a7a"/></svg><svg style="position:absolute;left:0;top:0" width="955" height="150" viewBox="0 0 955 150"><path d="M187,75 h5 l-2.5,2.75 z" fill="#b0b0b0"/><path d="M227.1,75 h5 l-2.5,2.75 z" fill="#b0b0b0"/><text x="242.6" y="82" font-size="14.2" fill="#a6a6a6" font-family="Liberation Sans">A</text><path d="M251,72 h5 l-2.5,-2.9 z" fill="#a6a6a6"/><text x="265.6" y="82.2" font-size="12" fill="#a6a6a6" font-family="Liberation Sans">A</text><path d="M273,69 h5 l-2.5,2.9 z" fill="#a6a6a6"/><rect x="285" y="65" width="1" height="22" fill="#e1e1e1"/><text x="294.6" y="76.7" font-size="10.5" fill="#a6a6a6" font-family="Liberation Sans">A</text><g transform="translate(303.6,77) rotate(-45)"><rect x="-5.5" y="-2.9" width="11.5" height="5.8" rx="0.6" fill="#c8c8c8"/><rect x="-5.5" y="-2.9" width="2.2" height="5.8" fill="#fff"/><rect x="-7.2" y="-2.9" width="2" height="5.8" fill="#c8c8c8"/></g><text x="85.2" y="110.8" font-size="11.8" font-weight="bold" fill="#a6a6a6" font-family="Liberation Sans">B</text><path d="M110.3,102.7 h5 M107.8,110.5 h5 M112.8,102.7 l-2.5,7.8" fill="none" stroke="#a6a6a6" stroke-width="1.3"/><text x="129" y="110.8" font-size="11.8" font-weight="bold" fill="#a6a6a6" font-family="Liberation Sans">U</text><rect x="129.5" y="112" width="8.5" height="1" fill="#a6a6a6"/><text x="149.8" y="110.8" font-size="11" font-weight="bold" fill="#a6a6a6" font-family="Liberation Sans">x</text><text x="158.5" y="112.8" font-size="6" font-weight="bold" fill="#a6a6a6" font-family="Liberation Sans">2</text><text x="172" y="110.8" font-size="11" font-weight="bold" fill="#a6a6a6" font-family="Liberation Sans">x</text><text x="180.8" y="105.6" font-size="6" font-weight="bold" fill="#a6a6a6" font-family="Liberation Sans">2</text><text x="191.5" y="110.8" font-size="12.2" fill="#a6a6a6" font-family="Liberation Sans" textLength="16" lengthAdjust="spacingAndGlyphs">Aa</text><path d="M212.3,106 h4.6 l-2.3,2.53 z" fill="#b8b8b8"/><rect x="226" y="96" width="1" height="22" fill="#e1e1e1"/><text x="234.3" y="107.8" font-size="10.8" fill="#a6a6a6" font-family="Liberation Sans" textLength="13.8" lengthAdjust="spacingAndGlyphs">AV</text><path d="M234.5,111.6 h15.5 M237.2,109 l-2.7,2.6 l2.7,2.6 M247.3,109 l2.7,2.6 l-2.7,2.6" fill="none" stroke="#a6a6a6" stroke-width="1.1"/><path d="M254.3,106 h4.6 l-2.3,2.53 z" fill="#b8b8b8"/><rect x="268" y="96" width="1" height="22" fill="#e1e1e1"/><text x="278.6" y="111.7" font-size="14.6" fill="#a6a6a6" font-family="Liberation Sans">A</text><path d="M298,106 h4.6 l-2.3,2.53 z" fill="#b8b8b8"/><path d="M305.5,141 V135.5 H311" fill="none" stroke="#b4b4b4" stroke-width="1"/><path d="M307.5,137.5 L311,141" stroke="#b4b4b4" stroke-width="1"/><path d="M308.5,142 H312 V138.5 Z" fill="#b4b4b4"/><circle cx="326.5" cy="69.2" r="1.3" fill="#a6a6a6"/><rect x="330" y="68.60000000000001" width="8" height="1.2" fill="#a6a6a6"/><circle cx="326.5" cy="75.3" r="1.3" fill="#a6a6a6"/><rect x="330" y="74.7" width="8" height="1.2" fill="#a6a6a6"/><circle cx="326.5" cy="81.5" r="1.3" fill="#a6a6a6"/><rect x="330" y="80.9" width="8" height="1.2" fill="#a6a6a6"/><path d="M344.2,75.5 h4.6 l-2.3,2.53 z" fill="#b8b8b8"/><text x="358" y="71.9" font-size="5.6" font-weight="bold" fill="#a6a6a6" font-family="Liberation Sans">1</text><rect x="363.3" y="68.60000000000001" width="8.7" height="1.2" fill="#a6a6a6"/><text x="358" y="78.0" font-size="5.6" font-weight="bold" fill="#a6a6a6" font-family="Liberation Sans">2</text><rect x="363.3" y="74.7" width="8.7" height="1.2" fill="#a6a6a6"/><text x="358" y="84.2" font-size="5.6" font-weight="bold" fill="#a6a6a6" font-family="Liberation Sans">3</text><rect x="363.3" y="80.9" width="8.7" height="1.2" fill="#a6a6a6"/><path d="M377,75.5 h4.6 l-2.3,2.53 z" fill="#b8b8b8"/><rect x="391" y="65" width="1" height="22" fill="#e1e1e1"/><rect x="406.1" y="70.80000000000001" width="8.8" height="1.2" fill="#a6a6a6"/><rect x="406.1" y="73.80000000000001" width="8.8" height="1.2" fill="#a6a6a6"/><rect x="406.1" y="76.80000000000001" width="5.8" height="1.2" fill="#a6a6a6"/><rect x="406.1" y="79.9" width="8.8" height="1.2" fill="#a6a6a6"/><rect x="401" y="70.8" width="3.8" height="1.2" fill="#a6a6a6"/><rect x="401" y="79.9" width="3.8" height="1.2" fill="#a6a6a6"/><path d="M399,75.9 L403.4,73 V74.9 H405.7 V76.9 H403.4 V78.8 Z" fill="#a6a6a6"/><rect x="428.20000000000005" y="70.80000000000001" width="8.8" height="1.2" fill="#a6a6a6"/><rect x="428.20000000000005" y="73.80000000000001" width="8.8" height="1.2" fill="#a6a6a6"/><rect x="428.20000000000005" y="76.80000000000001" width="5.8" height="1.2" fill="#a6a6a6"/><rect x="428.20000000000005" y="79.9" width="8.8" height="1.2" fill="#a6a6a6"/><rect x="423.1" y="70.8" width="3.8" height="1.2" fill="#a6a6a6"/><rect x="423.1" y="79.9" width="3.8" height="1.2" fill="#a6a6a6"/><path d="M427.8,75.9 L423.40000000000003,73 V74.9 H421.1 V76.9 H423.40000000000003 V78.8 Z" fill="#a6a6a6"/><rect x="444" y="65" width="1" height="22" fill="#e1e1e1"/><path d="M453,71.5 h5.5 M453,74.5 h5.5 M453,77.5 h5.5 M453,80.3 h5.5 M460.5,71.5 h5.7 M460.5,74.5 h5.7 M460.5,77.5 h5.7 M460.5,80.3 h5.7" stroke="#a6a6a6" stroke-width="1.1"/><path d="M472,75.5 h4.6 l-2.3,2.53 z" fill="#b8b8b8"/><rect x="486" y="65" width="1" height="22" fill="#e1e1e1"/><path d="M501,70 h6 v1.4 h-1.1 v10.6 h-1.3 v-10.6 h-1.5 v10.6 h-1.3 v-5.4 h-0.8 a3,3 0 0 1 0,-6.6 Z" fill="#777"/><rect x="324.8" y="101.7" width="14" height="1.1" fill="#a6a6a6"/><rect x="324.8" y="104.8" width="9" height="1.1" fill="#a6a6a6"/><rect x="324.8" y="107.9" width="14" height="1.1" fill="#a6a6a6"/><rect x="324.8" y="110.9" width="9" height="1.1" fill="#a6a6a6"/><rect x="346.9" y="101.7" width="14" height="1.1" fill="#a6a6a6"/><rect x="349.4" y="104.8" width="9" height="1.1" fill="#a6a6a6"/><rect x="346.9" y="107.9" width="14" height="1.1" fill="#a6a6a6"/><rect x="349.4" y="110.9" width="9" height="1.1" fill="#a6a6a6"/><rect x="368.9" y="101.7" width="14" height="1.1" fill="#a6a6a6"/><rect x="373.9" y="104.8" width="9" height="1.1" fill="#a6a6a6"/><rect x="368.9" y="107.9" width="14" height="1.1" fill="#a6a6a6"/><rect x="373.9" y="110.9" width="9" height="1.1" fill="#a6a6a6"/><rect x="391" y="101.7" width="14" height="1.1" fill="#a6a6a6"/><rect x="391" y="104.8" width="14" height="1.1" fill="#a6a6a6"/><rect x="391" y="107.9" width="14" height="1.1" fill="#a6a6a6"/><rect x="391" y="110.9" width="14" height="1.1" fill="#a6a6a6"/><rect x="413" y="96" width="1" height="22" fill="#e1e1e1"/><path d="M424.4,100.5 v5.3 M424.4,108.5 v5.8" stroke="#3f7fc1" stroke-width="1.3"/><path d="M421.7,102.6 l2.7,-3.3 l2.7,3.3 M421.7,111.8 l2.7,3.3 l2.7,-3.3" fill="none" stroke="#3f7fc1" stroke-width="1.3"/><path d="M428,102.1 h7.6 M428,105.3 h7.6 M428,108.5 h7.6 M428,111.7 h7.6" stroke="#555" stroke-width="1.2"/><path d="M441,106.2 h5 l-2.5,2.75 z" fill="#555"/><rect x="454" y="98.9" width="7.8" height="1.1" fill="#b5b5b5"/><rect x="454" y="103.7" width="7.8" height="1.1" fill="#b5b5b5"/><rect x="454" y="108.3" width="4" height="1.1" fill="#b5b5b5"/><rect x="454" y="113.5" width="3" height="1.1" fill="#b5b5b5"/><path d="M458,114.8 L464.5,114.8 L470.4,108 L470.4,102 Z" fill="#b5b5b5"/><circle cx="463.6" cy="110.8" r="1.3" fill="#fff"/><path d="M474.3,106.2 h4.6 l-2.3,2.53 z" fill="#c0c0c0"/><path d="M506.5,141 V135.5 H512" fill="none" stroke="#b4b4b4" stroke-width="1"/><path d="M508.5,137.5 L512,141" stroke="#b4b4b4" stroke-width="1"/><path d="M509.5,142 H513 V138.5 Z" fill="#b4b4b4"/></svg><svg style="position:absolute;left:0;top:0" width="955" height="150" viewBox="0 0 955 150"><path d="M537.5,62 H541.7 L548.2,82.7 H544 L542.5,77 H536.8 L535.2,82.7 H531 Z M539.6,65.6 L542.1,73.8 H537.1 Z" fill="#4a86c5" fill-rule="evenodd"/><path d="M558.3,68.3 V74 L549.6,82.3 L546.6,79.4 Z" fill="#7a7a7a" stroke="#fff" stroke-width="1.2" paint-order="stroke"/><path d="M548.8,77.2 L552,80.3" stroke="#fff" stroke-width="1"/><path d="M535.8,90.8 C537.8,87 541,83.2 545,82 C548.2,81 550.2,83.2 549.6,85.8 C549,88.5 546,90.3 541.5,90.7 Z" fill="#4a86c5" stroke="#fff" stroke-width="1.2" paint-order="stroke"/><path d="M545.5,83.5 C547.2,83.2 548.2,84.2 547.6,85.8" fill="none" stroke="#fff" stroke-width="1"/><path d="M540.2,117 h5 l-2.5,2.75 z" fill="#6d6d6d"/><path d="M23,117.5 h5 l-2.5,2.75 z" fill="#6d6d6d"/><rect x="583.7" y="63.7" width="26.6" height="23.6" fill="#fff" stroke="#6d6d6d" stroke-width="1.2"/><text x="586.5" y="75.8" font-size="11.6" fill="#3f7fc1" font-family="Liberation Sans">A</text><path d="M597.2,67.3 h10.8 M597.2,70.4 h10.8 M597.2,73.5 h10.8 M597.2,76.3 h10.8 M586,79.3 h22 M586,82.4 h22" stroke="#9a9a9a" stroke-width="1"/><rect x="625.5" y="60.7" width="13" height="12.8" fill="#fff" stroke="#6d6d6d" stroke-width="1"/><circle cx="634.3" cy="63.6" r="1.1" fill="#f0a030"/><path d="M626.5,72.5 v-4.5 l2.8,-2.8 l2.8,2.8 v4.5 z" fill="#b3cde6"/><circle cx="636.2" cy="71.4" r="4.6" fill="#fff"/><circle cx="636.2" cy="71.4" r="3.8" fill="none" stroke="#4a86c5" stroke-width="1.2"/><path d="M632.4,71.4 h7.6 M636.2,67.6 v7.6" stroke="#4a86c5" stroke-width="1"/><ellipse cx="636.2" cy="71.4" rx="1.7" ry="3.8" fill="none" stroke="#4a86c5" stroke-width="1"/><rect x="626.5" y="85.5" width="12" height="11" fill="#fff" stroke="#6d6d6d" stroke-width="1"/><rect x="626" y="85" width="13" height="2.6" fill="#6d6d6d"/><path d="M630.5,87.5 v9 M634.5,87.5 v9 M626.5,90.6 h12 M626.5,93.6 h12" stroke="#a0a0a0" stroke-width="0.9"/><path d="M645,90.3 h5 l-2.5,2.75 z" fill="#6d6d6d"/><path d="M633.5,109.8 H625.9 V117.3 H630" fill="none" stroke="#4a86c5" stroke-width="1.2"/><circle cx="635.6" cy="111.9" r="4.6" fill="none" stroke="#4a86c5" stroke-width="1.2"/><path d="M634.6,109.2 L639.6,114.2 L634.6,119.2 L629.6,114.2 Z" fill="#fff" stroke="#4a86c5" stroke-width="1.2"/><path d="M645,113.5 h5 l-2.5,2.75 z" fill="#6d6d6d"/><path d="M674.6,62.8 h13.8 l5.8,5.8 v20.5 h-19.6 Z" fill="#f8f3f8" stroke="#b5b0b5" stroke-width="1"/><path d="M688.4,62.8 v5.8 h5.8" fill="none" stroke="#b5b0b5" stroke-width="1"/><path d="M677,67.3 h10 M677,70.7 h10 M677,74.1 h3 M689,74.1 h3 M677,77.5 h2 M690,77.5 h2 M677,82.8 h15 M677,86.2 h15" stroke="#b5b0b5" stroke-width="1"/><path d="M680.6,80.3 A3.8,3.8 0 0 1 688.2,80.3" fill="none" stroke="#a6a6a6" stroke-width="2.8"/><path d="M695.3,118 h4.4 l-2.2,2.4200000000000004 z" fill="#c0c0c0"/><rect x="710" y="61" width="10" height="10" fill="#d6d2d6"/><path d="M716.5,71.5 v2.7 h6.7 v-6.7 h-2.7" fill="none" stroke="#a6a6a6" stroke-width="1"/><path d="M811.7,67.8 h5 l-2.5,2.75 z" fill="#c0c0c0"/><rect x="710" y="84" width="10" height="10" fill="#d6d2d6"/><rect x="716.5" y="90.5" width="6.7" height="6.9" fill="#fff" stroke="#a6a6a6" stroke-width="1"/><path d="M817.7,91 h5 l-2.5,2.75 z" fill="#c0c0c0"/><rect x="712" y="107" width="1.2" height="13.5" fill="#555"/><rect x="714.8" y="107.6" width="5" height="2.2" fill="#fff" stroke="#777" stroke-width="0.8"/><rect x="714.4" y="111" width="8.4" height="3.3" fill="#e8b060"/><path d="M714.5,118.3 h7.8 M717,116 l-2.5,2.3 l2.5,2.3" fill="none" stroke="#3f7fc1" stroke-width="1.2"/><path d="M758.8,113.3 h5 l-2.5,2.75 z" fill="#555"/><rect x="835.5" y="62" width="6.5" height="8" fill="none" stroke="#a6a6a6" stroke-width="1"/><rect x="837" y="65.5" width="8.5" height="7.5" fill="none" stroke="#a6a6a6" stroke-width="1"/><rect x="831.2" y="60.2" width="2.6" height="2.6" fill="#a6a6a6"/><rect x="844.2" y="60.2" width="2.6" height="2.6" fill="#a6a6a6"/><rect x="831.2" y="72.0" width="2.6" height="2.6" fill="#a6a6a6"/><rect x="844.2" y="72.0" width="2.6" height="2.6" fill="#a6a6a6"/><path d="M832.5,92.5 V84 H840.8 V88.5" fill="none" stroke="#a6a6a6" stroke-width="1"/><rect x="836.3" y="89" width="9.2" height="8.5" fill="#f0ecf0" stroke="#a6a6a6" stroke-width="1"/><rect x="831.2" y="82.7" width="2.6" height="2.6" fill="#a6a6a6"/><rect x="839.5" y="82.7" width="2.6" height="2.6" fill="#a6a6a6"/><rect x="831.2" y="91.2" width="2.6" height="2.6" fill="#a6a6a6"/><rect x="835.0" y="87.7" width="2.6" height="2.6" fill="#a6a6a6"/><rect x="844.2" y="87.7" width="2.6" height="2.6" fill="#a6a6a6"/><rect x="835.0" y="96.2" width="2.6" height="2.6" fill="#a6a6a6"/><rect x="844.2" y="96.2" width="2.6" height="2.6" fill="#a6a6a6"/><path d="M831.5,118.3 L839.5,111 V118.3 Z" fill="#f0ecf0" stroke="#c8c8c8" stroke-width="1"/><path d="M841.2,108 L846.8,118.5 H841.2 Z" fill="#a6a6a6"/><path d="M834.5,111.5 v-1.6 a1.5,1.5 0 0 1 1.5,-1.5 h2" fill="none" stroke="#a6a6a6" stroke-width="1"/><path d="M837.8,107 l1.8,1.4 l-1.8,1.4 z" fill="#a6a6a6"/><path d="M851.2,113 h4.6 l-2.3,2.53 z" fill="#c0c0c0"/><rect x="872.5" y="58.5" width="29" height="29" fill="#fff" stroke="#c6c6c6" stroke-width="1"/><rect x="883" y="66" width="3.2" height="2.2" fill="#666"/><rect x="882" y="68" width="4.5" height="3.8" fill="#666"/><rect x="881" y="71.5" width="5.5" height="2.5" fill="#666"/><rect x="880" y="73.5" width="6.6" height="5.3" fill="#666"/><rect x="888.7" y="66" width="3.2" height="2.2" fill="#666"/><rect x="888.4000000000001" y="68" width="4.5" height="3.8" fill="#666"/><rect x="888.4000000000001" y="71.5" width="5.5" height="2.5" fill="#666"/><rect x="888.3000000000001" y="73.5" width="6.6" height="5.3" fill="#666"/><rect x="886" y="69.5" width="2.9" height="3.5" fill="#666"/><rect x="881.2" y="74.8" width="1.3" height="3.2" fill="#fff"/><rect x="892.4" y="74.8" width="1.3" height="3.2" fill="#fff"/><circle cx="883.6" cy="69.6" r="0.8" fill="#fff"/><circle cx="891.3" cy="69.6" r="0.8" fill="#fff"/><circle cx="887.45" cy="72" r="0.8" fill="#fff"/><path d="M885.2,115 h5 l-2.5,2.75 z" fill="#6d6d6d"/><path d="M935.5,140.5 L939.7,136.3 L943.9,140.5" fill="none" stroke="#6d6d6d" stroke-width="1.5"/></svg><svg style="position:absolute;left:0;top:0" width="955" height="533" viewBox="0 0 955 533"><path d="M128.8,164.5 L125,167.6 L128.8,170.7" fill="none" stroke="#444" stroke-width="1.6"/><path d="M9.8,198 L16,198 L16,191.8 Z" fill="#444"/><g transform="translate(0,0.9)"><path d="M148.4,154.2 h8.1 l4.3,3.6 v11.7 h-12.4 Z" fill="#fff" stroke="#a0a0a0" stroke-width="0.9"/><path d="M156.5,154.2 v3.6 h4.3" fill="none" stroke="#a0a0a0" stroke-width="0.8"/><path d="M153.5,158.2 h3.8 v2.6 a2.6,2.6 0 0 1 -3.8,2.2 Z" fill="#8ec9c1"/><path d="M153.3,165.4 h6 M153.3,167.4 h6" stroke="#8a8a8a" stroke-width="0.9"/><path d="M145,157.6 L151.8,156.9 V168.2 L145,167.5 Z" fill="#077568"/><path d="M146.7,159.5 h2.3 a1.7,1.7 0 0 1 0,3.4 h-1 v2.6 h-1.3 Z" fill="#fff"/><rect x="148" y="160.6" width="0.9" height="1.2" fill="#077568"/></g><g transform="translate(0,0.9)"><path d="M273.2,154.2 h8.1 l4.3,3.6 v11.7 h-12.4 Z" fill="#fff" stroke="#a0a0a0" stroke-width="0.9"/><path d="M281.3,154.2 v3.6 h4.3" fill="none" stroke="#a0a0a0" stroke-width="0.8"/><path d="M278.3,158.2 h3.8 v2.6 a2.6,2.6 0 0 1 -3.8,2.2 Z" fill="#8ec9c1"/><path d="M278.1,165.4 h6 M278.1,167.4 h6" stroke="#8a8a8a" stroke-width="0.9"/><path d="M269.8,157.6 L276.6,156.9 V168.2 L269.8,167.5 Z" fill="#077568"/><path d="M271.5,159.5 h2.3 a1.7,1.7 0 0 1 0,3.4 h-1 v2.6 h-1.3 Z" fill="#fff"/><rect x="272.8" y="160.6" width="0.9" height="1.2" fill="#077568"/></g><g transform="translate(0,0)"><path d="M400.29999999999995,154.2 h8.1 l4.3,3.6 v11.7 h-12.4 Z" fill="#fff" stroke="#a0a0a0" stroke-width="0.9"/><path d="M408.4,154.2 v3.6 h4.3" fill="none" stroke="#a0a0a0" stroke-width="0.8"/><path d="M405.4,158.2 h3.8 v2.6 a2.6,2.6 0 0 1 -3.8,2.2 Z" fill="#8ec9c1"/><path d="M405.2,165.4 h6 M405.2,167.4 h6" stroke="#8a8a8a" stroke-width="0.9"/><path d="M396.9,157.6 L403.7,156.9 V168.2 L396.9,167.5 Z" fill="#077568"/><path d="M398.59999999999997,159.5 h2.3 a1.7,1.7 0 0 1 0,3.4 h-1 v2.6 h-1.3 Z" fill="#fff"/><rect x="399.9" y="160.6" width="0.9" height="1.2" fill="#077568"/></g><path d="M502.5,159.5 L510.3,166.3 M510.3,159.5 L502.5,166.3" stroke="#7fb3ab" stroke-width="1.6"/><path d="M899.5,160.5 h8 l-4,4.4 z" fill="#111"/><path d="M922.3,158.8 L930.5,166.2 M930.5,158.8 L922.3,166.2" stroke="#111" stroke-width="2.3"/><path d="M941.5,158.5 h8.2 l-4.1,-4 z" fill="#8a8a8a"/><path d="M941.5,447.5 h8.2 l-4.1,4 z" fill="#8a8a8a"/><path d="M942,466.4 l3.5,-3.2 l3.5,3.2 z M942,469.8 l3.5,-3.2 l3.5,3.2 z" fill="#555"/><path d="M942,481.3 h7 l-3.5,3.2 z M942,484.6 h7 l-3.5,3.2 z" fill="#555"/><path d="M152.2,498.3 v6.6 l-4.2,-3.3 z" fill="#8a8a8a"/><path d="M926,498.3 v6.6 l4.2,-3.3 z" fill="#8a8a8a"/><path d="M97.5,514.2 V526.5 L100.4,523.7 L102.6,527.6 L104.4,526.7 L102.3,522.9 L106,522.6 Z" fill="#fff" stroke="#7a7a7a" stroke-width="0.7"/><rect x="128.7" y="515.6" width="12.8" height="10" fill="none" stroke="#fff" stroke-width="1"/><rect x="128.7" y="515.6" width="9.9" height="7.1" fill="#fff"/><text x="129.7" y="521.5" font-size="6.4" font-weight="bold" fill="#077568" font-family="Liberation Sans" textLength="8" lengthAdjust="spacingAndGlyphs">XY</text><rect x="682.5" y="514.3" width="13.2" height="12.3" fill="none" stroke="#fff" stroke-width="1.1"/><path d="M684,516.5 h10 M684,518.5 h10 M684,520.5 h10 M684,522.5 h10 M684,524.5 h10" stroke="#fff" stroke-width="1"/><rect x="720.5" y="514.3" width="12.2" height="12.3" fill="none" stroke="#fff" stroke-width="1.1"/><rect x="722.5" y="516.5" width="3.4" height="8.2" fill="none" stroke="#fff" stroke-width="1"/><rect x="727.4" y="516.5" width="3.4" height="8.2" fill="none" stroke="#fff" stroke-width="1"/><path d="M722.5,518.6 h3.4 M722.5,520.6 h3.4 M722.5,522.6 h3.4 M727.4,518.6 h3.4 M727.4,520.6 h3.4 M727.4,522.6 h3.4" stroke="#fff" stroke-width="0.9"/><rect x="751" y="519.7" width="6" height="2.2" fill="#fff"/><rect x="761.2" y="520.3" width="99.4" height="1" fill="#fff"/><rect x="774" y="515" width="4" height="12" fill="#fff"/><rect x="811" y="518" width="1" height="5" fill="#fff"/><path d="M864.6,520.8 h8.4 M868.8,516.6 v8.4" stroke="#fff" stroke-width="2.2"/><rect x="923.7" y="515.8" width="11.5" height="11.2" fill="none" stroke="#fff" stroke-width="1"/><path d="M929.5,517.5 v2.5 M929.5,522.8 v2.5 M925.5,521.4 h2.5 M931,521.4 h2.5" stroke="#fff" stroke-width="0.8"/><path d="M928.1,518.9 l1.4,-1.6 l1.4,1.6 z M928.1,523.9 l1.4,1.6 l1.4,-1.6 z M927,520 l-1.6,1.4 l1.6,1.4 z M932,520 l1.6,1.4 l-1.6,1.4 z" fill="#fff"/></svg>
</body></html>
